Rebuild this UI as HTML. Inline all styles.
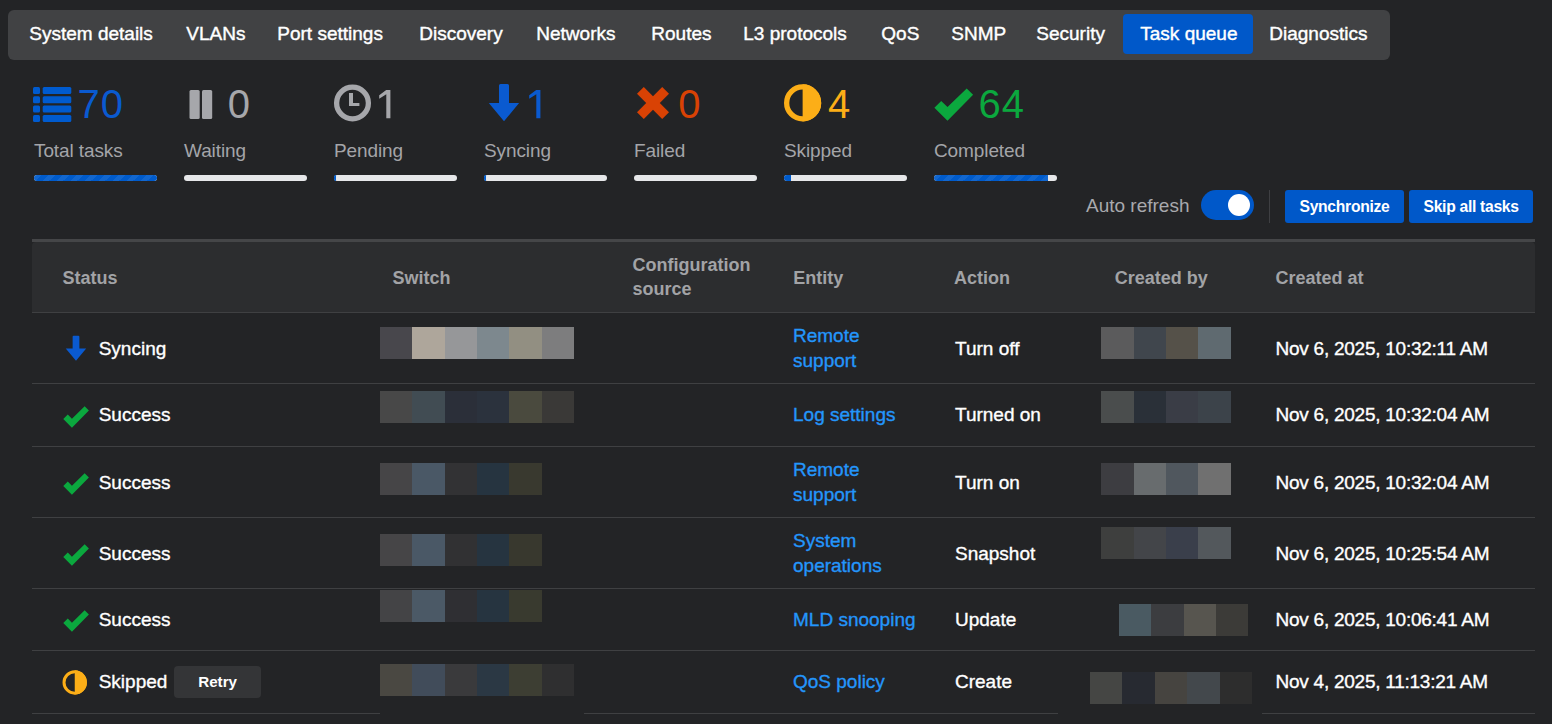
<!DOCTYPE html>
<html><head><meta charset="utf-8"><title>Task queue</title>
<style>
html,body{margin:0;padding:0;}
body{width:1552px;height:724px;overflow:hidden;background:#232426;position:relative;font-family:"Liberation Sans",sans-serif;}
.t{position:absolute;white-space:nowrap;line-height:1;}
.r{position:absolute;}
.nav{-webkit-text-stroke:0.4px #fff;}
.bt{-webkit-text-stroke:0.35px currentColor;}
</style></head><body>
<div class="r" style="left:8px;top:10px;width:1382px;height:50px;background:#414244;border-radius:6px;"></div>
<div class="r" style="left:1123px;top:14px;width:130px;height:40px;background:#0058c9;border-radius:4px;"></div>
<div class="t nav" style="left:29.3px;top:24.1px;font-size:19px;color:#fff;">System details</div>
<div class="t nav" style="left:186.3px;top:24.1px;font-size:19px;color:#fff;">VLANs</div>
<div class="t nav" style="left:277.3px;top:24.1px;font-size:19px;color:#fff;">Port settings</div>
<div class="t nav" style="left:419.3px;top:24.1px;font-size:19px;color:#fff;">Discovery</div>
<div class="t nav" style="left:536.3px;top:24.1px;font-size:19px;color:#fff;">Networks</div>
<div class="t nav" style="left:651.3px;top:24.1px;font-size:19px;color:#fff;">Routes</div>
<div class="t nav" style="left:743.3px;top:24.1px;font-size:19px;color:#fff;">L3 protocols</div>
<div class="t nav" style="left:881.3px;top:24.1px;font-size:19px;color:#fff;">QoS</div>
<div class="t nav" style="left:951.3px;top:24.1px;font-size:19px;color:#fff;">SNMP</div>
<div class="t nav" style="left:1036.3px;top:24.1px;font-size:19px;color:#fff;">Security</div>
<div class="t nav" style="left:1140.3px;top:24.1px;font-size:19px;color:#fff;">Task queue</div>
<div class="t nav" style="left:1269.3px;top:24.1px;font-size:19px;color:#fff;">Diagnostics</div>
<div class="t num" style="left:77.6px;top:84.4px;font-size:40px;color:#0a5ad0;letter-spacing:1px;">70</div>
<div class="t lab" style="left:34.0px;top:141.1px;font-size:19px;color:#a4a5a9;letter-spacing:-0.1px;">Total tasks</div>
<div class="t num" style="left:227.8px;top:84.4px;font-size:40px;color:#a6a7ab;">0</div>
<div class="t lab" style="left:184.0px;top:141.1px;font-size:19px;color:#a4a5a9;letter-spacing:-0.1px;">Waiting</div>
<svg class="r" style="left:379.0px;top:89.8px" width="12" height="29" viewBox="0 0 12 29"><polygon points="7.2,0 11.4,0 11.4,28.3 7.3,28.3 7.3,4.3 0.2,8.8 0.2,5.2" fill="#a6a7ab"/></svg>
<div class="t lab" style="left:334.0px;top:141.1px;font-size:19px;color:#a4a5a9;letter-spacing:-0.1px;">Pending</div>
<svg class="r" style="left:529.0px;top:89.8px" width="12" height="29" viewBox="0 0 12 29"><polygon points="7.2,0 11.4,0 11.4,28.3 7.3,28.3 7.3,4.3 0.2,8.8 0.2,5.2" fill="#0a5ad0"/></svg>
<div class="t lab" style="left:484.0px;top:141.1px;font-size:19px;color:#a4a5a9;letter-spacing:-0.1px;">Syncing</div>
<div class="t num" style="left:678.3px;top:84.4px;font-size:40px;color:#d94204;">0</div>
<div class="t lab" style="left:634.0px;top:141.1px;font-size:19px;color:#a4a5a9;letter-spacing:-0.1px;">Failed</div>
<div class="t num" style="left:828.0px;top:84.4px;font-size:40px;color:#fcae17;">4</div>
<div class="t lab" style="left:784.0px;top:141.1px;font-size:19px;color:#a4a5a9;letter-spacing:-0.1px;">Skipped</div>
<div class="t num" style="left:978.5px;top:84.4px;font-size:40px;color:#0ba83e;letter-spacing:1px;">64</div>
<div class="t lab" style="left:934.0px;top:141.1px;font-size:19px;color:#a4a5a9;letter-spacing:-0.1px;">Completed</div>
<svg class="r" style="left:33px;top:87px" width="39" height="36" viewBox="0 0 39 36">
<g fill="#005bcf">
<rect x="0" y="0" width="7" height="7" rx="1.5"/><rect x="9.7" y="0" width="28.6" height="7" rx="1.5"/>
<rect x="0" y="9.3" width="7" height="7" rx="1.5"/><rect x="9.7" y="9.3" width="28.6" height="7" rx="1.5"/>
<rect x="0" y="18.6" width="7" height="7" rx="1.5"/><rect x="9.7" y="18.6" width="28.6" height="7" rx="1.5"/>
<rect x="0" y="27.9" width="7" height="7" rx="1.5"/><rect x="9.7" y="27.9" width="28.6" height="7" rx="1.5"/>
</g></svg>
<svg class="r" style="left:189px;top:90px" width="24" height="29" viewBox="0 0 24 29">
<g fill="#a6a7ab"><rect x="0.5" y="0" width="10.2" height="29" rx="1.5"/><rect x="13" y="0" width="10.2" height="29" rx="1.5"/></g></svg>
<svg class="r" style="left:333px;top:84px" width="39" height="39" viewBox="0 0 39 39">
<circle cx="19.5" cy="19" r="15.9" fill="none" stroke="#a6a7ab" stroke-width="5.3"/>
<path d="M16 9 h4 v10 h6.4 v3 H16 z" fill="#a6a7ab"/></svg>
<svg class="r" style="left:488px;top:83px" width="32" height="40" viewBox="0 0 32 40">
<path d="M12.5 1 Q11 1 11 2.5 V20 H0.8 L16 38.2 L31.1 20 H21 V2.5 Q21 1 19.5 1 Z" fill="#0a5ad0"/></svg>
<svg class="r" style="left:637px;top:87px" width="32" height="32" viewBox="0 0 32 32">
<polygon points="0,6.8 6.8,0 16,9.2 25.2,0 32,6.8 22.8,16 32,25.2 25.2,32 16,22.8 6.8,32 0,25.2 9.2,16" fill="#d94204"/></svg>
<svg class="r" style="left:783px;top:83px" width="40" height="40" viewBox="0 0 40 40">
<circle cx="19.6" cy="19.9" r="15.95" fill="none" stroke="#fcae17" stroke-width="5.3"/>
<path d="M19.6 1.3 A18.6 18.6 0 0 1 19.6 38.5 Z" fill="#fcae17"/></svg>
<svg class="r" style="left:934px;top:88px" width="40" height="34" viewBox="0 0 40 34">
<polygon points="0.4,19.7 7.2,12.9 13.5,19.1 32.7,0.4 39.1,6.8 13.5,32.7" fill="#0ba83e"/></svg>
<div class="r" style="left:34px;top:175px;width:123px;height:6px;background:#e6e7e9;border-radius:3px;overflow:hidden;"></div>
<div class="r" style="left:184px;top:175px;width:123px;height:6px;background:#e6e7e9;border-radius:3px;overflow:hidden;"></div>
<div class="r" style="left:334px;top:175px;width:123px;height:6px;background:#e6e7e9;border-radius:3px;overflow:hidden;"></div>
<div class="r" style="left:484px;top:175px;width:123px;height:6px;background:#e6e7e9;border-radius:3px;overflow:hidden;"></div>
<div class="r" style="left:634px;top:175px;width:123px;height:6px;background:#e6e7e9;border-radius:3px;overflow:hidden;"></div>
<div class="r" style="left:784px;top:175px;width:123px;height:6px;background:#e6e7e9;border-radius:3px;overflow:hidden;"></div>
<div class="r" style="left:934px;top:175px;width:123px;height:6px;background:#e6e7e9;border-radius:3px;overflow:hidden;"></div>
<div class="r" style="left:34px;top:175px;width:123px;height:6px;border-radius:3px;background-color:#005bcb;background-image:linear-gradient(135deg,rgba(255,255,255,.07) 25%,transparent 25%,transparent 50%,rgba(255,255,255,.07) 50%,rgba(255,255,255,.07) 75%,transparent 75%,transparent);background-size:14px 14px;"></div>
<div class="r" style="left:934px;top:175px;width:114px;height:6px;border-radius:3px 0 0 3px;background-color:#005bcb;background-image:linear-gradient(135deg,rgba(255,255,255,.07) 25%,transparent 25%,transparent 50%,rgba(255,255,255,.07) 50%,rgba(255,255,255,.07) 75%,transparent 75%,transparent);background-size:14px 14px;"></div>
<div class="r" style="left:334px;top:175px;width:2px;height:6px;background:#005bcb;border-radius:3px 0 0 3px;"></div>
<div class="r" style="left:484px;top:175px;width:2px;height:6px;background:#005bcb;border-radius:3px 0 0 3px;"></div>
<div class="r" style="left:784px;top:175px;width:7px;height:6px;background:#005bcb;border-radius:3px 0 0 3px;"></div>
<div class="t " style="left:1086.0px;top:195.8px;font-size:19px;color:#a8a9ad;">Auto refresh</div>
<div class="r" style="left:1201px;top:190px;width:53px;height:30px;background:#0058c9;border-radius:15px;"></div>
<div class="r" style="left:1228px;top:194px;width:22px;height:22px;background:#fff;border-radius:50%;"></div>
<div class="r" style="left:1269px;top:190px;width:1px;height:33px;background:#3e3f42;"></div>
<div class="r" style="left:1285px;top:190px;width:119px;height:33px;background:#0058c9;border-radius:3px;"></div>
<div class="r" style="left:1409px;top:190px;width:124px;height:33px;background:#0058c9;border-radius:3px;"></div>
<div class="t " style="left:1299.5px;top:199.0px;font-size:15.7px;color:#fff;font-weight:700;letter-spacing:-0.3px;">Synchronize</div>
<div class="t " style="left:1423.5px;top:199.0px;font-size:15.7px;color:#fff;font-weight:700;letter-spacing:-0.3px;">Skip all tasks</div>
<div class="r" style="left:32px;top:239px;width:1503px;height:3px;background:#454648;"></div>
<div class="r" style="left:32px;top:242px;width:1503px;height:70px;background:#2c2d2f;border-radius:4px 4px 0 0;"></div>
<div class="t " style="left:62.5px;top:269.2px;font-size:18px;color:#a2a3a6;font-weight:700;">Status</div>
<div class="t " style="left:392.6px;top:269.2px;font-size:18px;color:#a2a3a6;font-weight:700;">Switch</div>
<div class="t " style="left:793.3px;top:269.2px;font-size:18px;color:#a2a3a6;font-weight:700;">Entity</div>
<div class="t " style="left:954.0px;top:269.2px;font-size:18px;color:#a2a3a6;font-weight:700;">Action</div>
<div class="t " style="left:1114.7px;top:269.2px;font-size:18px;color:#a2a3a6;font-weight:700;">Created by</div>
<div class="t " style="left:1275.4px;top:269.2px;font-size:18px;color:#a2a3a6;font-weight:700;">Created at</div>
<div class="t " style="left:632.5px;top:256.2px;font-size:18px;color:#a2a3a6;font-weight:700;">Configuration</div>
<div class="t " style="left:632.5px;top:280.3px;font-size:18px;color:#a2a3a6;font-weight:700;">source</div>
<div class="r" style="left:32px;top:312px;width:1503px;height:1px;background:#3f4042;"></div>
<div class="r" style="left:32px;top:383px;width:1503px;height:1px;background:#3f4042;"></div>
<div class="r" style="left:32px;top:446px;width:1503px;height:1px;background:#3f4042;"></div>
<div class="r" style="left:32px;top:517px;width:1503px;height:1px;background:#3f4042;"></div>
<div class="r" style="left:32px;top:588px;width:1503px;height:1px;background:#3f4042;"></div>
<div class="r" style="left:32px;top:650px;width:1503px;height:1px;background:#3f4042;"></div>
<div class="r" style="left:32px;top:713px;width:1503px;height:1px;background:#3f4042;"></div>
<div class="t bt" style="left:98.7px;top:338.9px;font-size:19px;color:#fff;">Syncing</div>
<div class="t bt" style="left:955.0px;top:338.9px;font-size:19px;color:#fff;">Turn off</div>
<div class="t bt" style="left:1275.5px;top:338.9px;font-size:19px;color:#fff;letter-spacing:-0.25px;">Nov 6, 2025, 10:32:11 AM</div>
<div class="t bt" style="left:793.0px;top:326.1px;font-size:19px;color:#2396fb;">Remote</div>
<div class="t bt" style="left:793.0px;top:351.1px;font-size:19px;color:#2396fb;">support</div>
<div class="t bt" style="left:98.7px;top:405.1px;font-size:19px;color:#fff;">Success</div>
<div class="t bt" style="left:955.0px;top:405.1px;font-size:19px;color:#fff;">Turned on</div>
<div class="t bt" style="left:1275.5px;top:405.1px;font-size:19px;color:#fff;letter-spacing:-0.25px;">Nov 6, 2025, 10:32:04 AM</div>
<div class="t bt" style="left:793.0px;top:405.1px;font-size:19px;color:#2396fb;">Log settings</div>
<div class="t bt" style="left:98.7px;top:472.9px;font-size:19px;color:#fff;">Success</div>
<div class="t bt" style="left:955.0px;top:472.9px;font-size:19px;color:#fff;">Turn on</div>
<div class="t bt" style="left:1275.5px;top:472.9px;font-size:19px;color:#fff;letter-spacing:-0.25px;">Nov 6, 2025, 10:32:04 AM</div>
<div class="t bt" style="left:793.0px;top:460.1px;font-size:19px;color:#2396fb;">Remote</div>
<div class="t bt" style="left:793.0px;top:485.1px;font-size:19px;color:#2396fb;">support</div>
<div class="t bt" style="left:98.7px;top:543.9px;font-size:19px;color:#fff;">Success</div>
<div class="t bt" style="left:955.0px;top:543.9px;font-size:19px;color:#fff;">Snapshot</div>
<div class="t bt" style="left:1275.5px;top:543.9px;font-size:19px;color:#fff;letter-spacing:-0.25px;">Nov 6, 2025, 10:25:54 AM</div>
<div class="t bt" style="left:793.0px;top:531.1px;font-size:19px;color:#2396fb;">System</div>
<div class="t bt" style="left:793.0px;top:556.1px;font-size:19px;color:#2396fb;">operations</div>
<div class="t bt" style="left:98.7px;top:609.6px;font-size:19px;color:#fff;">Success</div>
<div class="t bt" style="left:955.0px;top:609.6px;font-size:19px;color:#fff;">Update</div>
<div class="t bt" style="left:1275.5px;top:609.6px;font-size:19px;color:#fff;letter-spacing:-0.25px;">Nov 6, 2025, 10:06:41 AM</div>
<div class="t bt" style="left:793.0px;top:609.6px;font-size:19px;color:#2396fb;">MLD snooping</div>
<div class="t bt" style="left:98.7px;top:672.1px;font-size:19px;color:#fff;">Skipped</div>
<div class="t bt" style="left:955.0px;top:672.1px;font-size:19px;color:#fff;">Create</div>
<div class="t bt" style="left:1275.5px;top:672.1px;font-size:19px;color:#fff;letter-spacing:-0.25px;">Nov 4, 2025, 11:13:21 AM</div>
<div class="t bt" style="left:793.0px;top:672.1px;font-size:19px;color:#2396fb;">QoS policy</div>
<svg class="r" style="left:65px;top:335px" width="22" height="27" viewBox="0 0 32 40">
<path d="M12.5 1 Q11 1 11 2.5 V20 H0.8 L16 38.2 L31.1 20 H21 V2.5 Q21 1 19.5 1 Z" fill="#0a5ad0"/></svg>
<svg class="r" style="left:62.5px;top:405.7px" width="26.5" height="22.5" viewBox="0 0 40 34">
<polygon points="0.4,19.7 7.2,12.9 13.5,19.1 32.7,0.4 39.1,6.8 13.5,32.7" fill="#0ba83e"/></svg>
<svg class="r" style="left:62.5px;top:472.7px" width="26.5" height="22.5" viewBox="0 0 40 34">
<polygon points="0.4,19.7 7.2,12.9 13.5,19.1 32.7,0.4 39.1,6.8 13.5,32.7" fill="#0ba83e"/></svg>
<svg class="r" style="left:62.5px;top:543.7px" width="26.5" height="22.5" viewBox="0 0 40 34">
<polygon points="0.4,19.7 7.2,12.9 13.5,19.1 32.7,0.4 39.1,6.8 13.5,32.7" fill="#0ba83e"/></svg>
<svg class="r" style="left:62.5px;top:610.2px" width="26.5" height="22.5" viewBox="0 0 40 34">
<polygon points="0.4,19.7 7.2,12.9 13.5,19.1 32.7,0.4 39.1,6.8 13.5,32.7" fill="#0ba83e"/></svg>
<svg class="r" style="left:62px;top:669px" width="26" height="27" viewBox="0 0 40 40">
<circle cx="19.6" cy="19.9" r="16.5" fill="none" stroke="#fcae17" stroke-width="4.6"/>
<path d="M19.6 1.3 A18.6 18.6 0 0 1 19.6 38.5 Z" fill="#fcae17"/></svg>
<div class="r" style="left:174px;top:666px;width:87px;height:32px;background:#343537;border-radius:4px;"></div>
<div class="t " style="left:198.2px;top:673.5px;font-size:15.2px;color:#fff;font-weight:700;">Retry</div>
<div class="r" style="left:380px;top:327px;width:32px;height:32px;background:#48474c;"></div>
<div class="r" style="left:412px;top:327px;width:33px;height:32px;background:#aea69b;"></div>
<div class="r" style="left:445px;top:327px;width:32px;height:32px;background:#969799;"></div>
<div class="r" style="left:477px;top:327px;width:32px;height:32px;background:#7d888e;"></div>
<div class="r" style="left:509px;top:327px;width:33px;height:32px;background:#928f82;"></div>
<div class="r" style="left:542px;top:327px;width:32px;height:32px;background:#7d7d7e;"></div>
<div class="r" style="left:380px;top:391px;width:32px;height:32px;background:#484848;"></div>
<div class="r" style="left:412px;top:391px;width:33px;height:32px;background:#414c53;"></div>
<div class="r" style="left:445px;top:391px;width:32px;height:32px;background:#2b2f39;"></div>
<div class="r" style="left:477px;top:391px;width:32px;height:32px;background:#2b323d;"></div>
<div class="r" style="left:509px;top:391px;width:33px;height:32px;background:#4a4a3e;"></div>
<div class="r" style="left:542px;top:391px;width:32px;height:32px;background:#3a3937;"></div>
<div class="r" style="left:380px;top:463px;width:32px;height:32px;background:#464547;"></div>
<div class="r" style="left:412px;top:463px;width:33px;height:32px;background:#4a5866;"></div>
<div class="r" style="left:445px;top:463px;width:32px;height:32px;background:#323234;"></div>
<div class="r" style="left:477px;top:463px;width:32px;height:32px;background:#263440;"></div>
<div class="r" style="left:509px;top:463px;width:33px;height:32px;background:#39392f;"></div>
<div class="r" style="left:380px;top:534px;width:32px;height:32px;background:#464547;"></div>
<div class="r" style="left:412px;top:534px;width:33px;height:32px;background:#4a5866;"></div>
<div class="r" style="left:445px;top:534px;width:32px;height:32px;background:#313133;"></div>
<div class="r" style="left:477px;top:534px;width:32px;height:32px;background:#263440;"></div>
<div class="r" style="left:509px;top:534px;width:33px;height:32px;background:#38382e;"></div>
<div class="r" style="left:380px;top:590px;width:32px;height:32px;background:#444446;"></div>
<div class="r" style="left:412px;top:590px;width:33px;height:32px;background:#4b5966;"></div>
<div class="r" style="left:445px;top:590px;width:32px;height:32px;background:#2f2f33;"></div>
<div class="r" style="left:477px;top:590px;width:32px;height:32px;background:#263440;"></div>
<div class="r" style="left:509px;top:590px;width:33px;height:32px;background:#393a2f;"></div>
<div class="r" style="left:380px;top:697px;width:204px;height:17px;background:#232426;"></div>
<div class="r" style="left:380px;top:664px;width:32px;height:32px;background:#4a4842;"></div>
<div class="r" style="left:412px;top:664px;width:33px;height:32px;background:#414c5a;"></div>
<div class="r" style="left:445px;top:664px;width:32px;height:32px;background:#3a3a3c;"></div>
<div class="r" style="left:477px;top:664px;width:32px;height:32px;background:#2b3844;"></div>
<div class="r" style="left:509px;top:664px;width:33px;height:32px;background:#3d3e33;"></div>
<div class="r" style="left:542px;top:664px;width:32px;height:32px;background:#2f2f30;"></div>
<div class="r" style="left:1101px;top:327px;width:33px;height:32px;background:#5b5b5c;"></div>
<div class="r" style="left:1134px;top:327px;width:32px;height:32px;background:#40464d;"></div>
<div class="r" style="left:1166px;top:327px;width:32px;height:32px;background:#555149;"></div>
<div class="r" style="left:1198px;top:327px;width:33px;height:32px;background:#5f6a70;"></div>
<div class="r" style="left:1101px;top:391px;width:33px;height:32px;background:#4a4d4d;"></div>
<div class="r" style="left:1134px;top:391px;width:32px;height:32px;background:#2a3038;"></div>
<div class="r" style="left:1166px;top:391px;width:32px;height:32px;background:#3a3d46;"></div>
<div class="r" style="left:1198px;top:391px;width:33px;height:32px;background:#3c434a;"></div>
<div class="r" style="left:1101px;top:463px;width:33px;height:32px;background:#3d3d41;"></div>
<div class="r" style="left:1134px;top:463px;width:32px;height:32px;background:#686c6e;"></div>
<div class="r" style="left:1166px;top:463px;width:32px;height:32px;background:#50575e;"></div>
<div class="r" style="left:1198px;top:463px;width:33px;height:32px;background:#707070;"></div>
<div class="r" style="left:1101px;top:527px;width:33px;height:32px;background:#3e3f3e;"></div>
<div class="r" style="left:1134px;top:527px;width:32px;height:32px;background:#434549;"></div>
<div class="r" style="left:1166px;top:527px;width:32px;height:32px;background:#3a3f4b;"></div>
<div class="r" style="left:1198px;top:527px;width:33px;height:32px;background:#53585c;"></div>
<div class="r" style="left:1119px;top:604px;width:32px;height:32px;background:#4a5a62;"></div>
<div class="r" style="left:1151px;top:604px;width:33px;height:32px;background:#3c3d40;"></div>
<div class="r" style="left:1184px;top:604px;width:32px;height:32px;background:#57554f;"></div>
<div class="r" style="left:1216px;top:604px;width:32px;height:32px;background:#3c3b38;"></div>
<div class="r" style="left:1058px;top:704px;width:204px;height:10px;background:#232426;"></div>
<div class="r" style="left:1090px;top:672px;width:32px;height:32px;background:#454644;"></div>
<div class="r" style="left:1122px;top:672px;width:33px;height:32px;background:#272a31;"></div>
<div class="r" style="left:1155px;top:672px;width:32px;height:32px;background:#464440;"></div>
<div class="r" style="left:1187px;top:672px;width:33px;height:32px;background:#43484c;"></div>
<div class="r" style="left:1220px;top:672px;width:32px;height:32px;background:#2d2d2d;"></div>
</body></html>
